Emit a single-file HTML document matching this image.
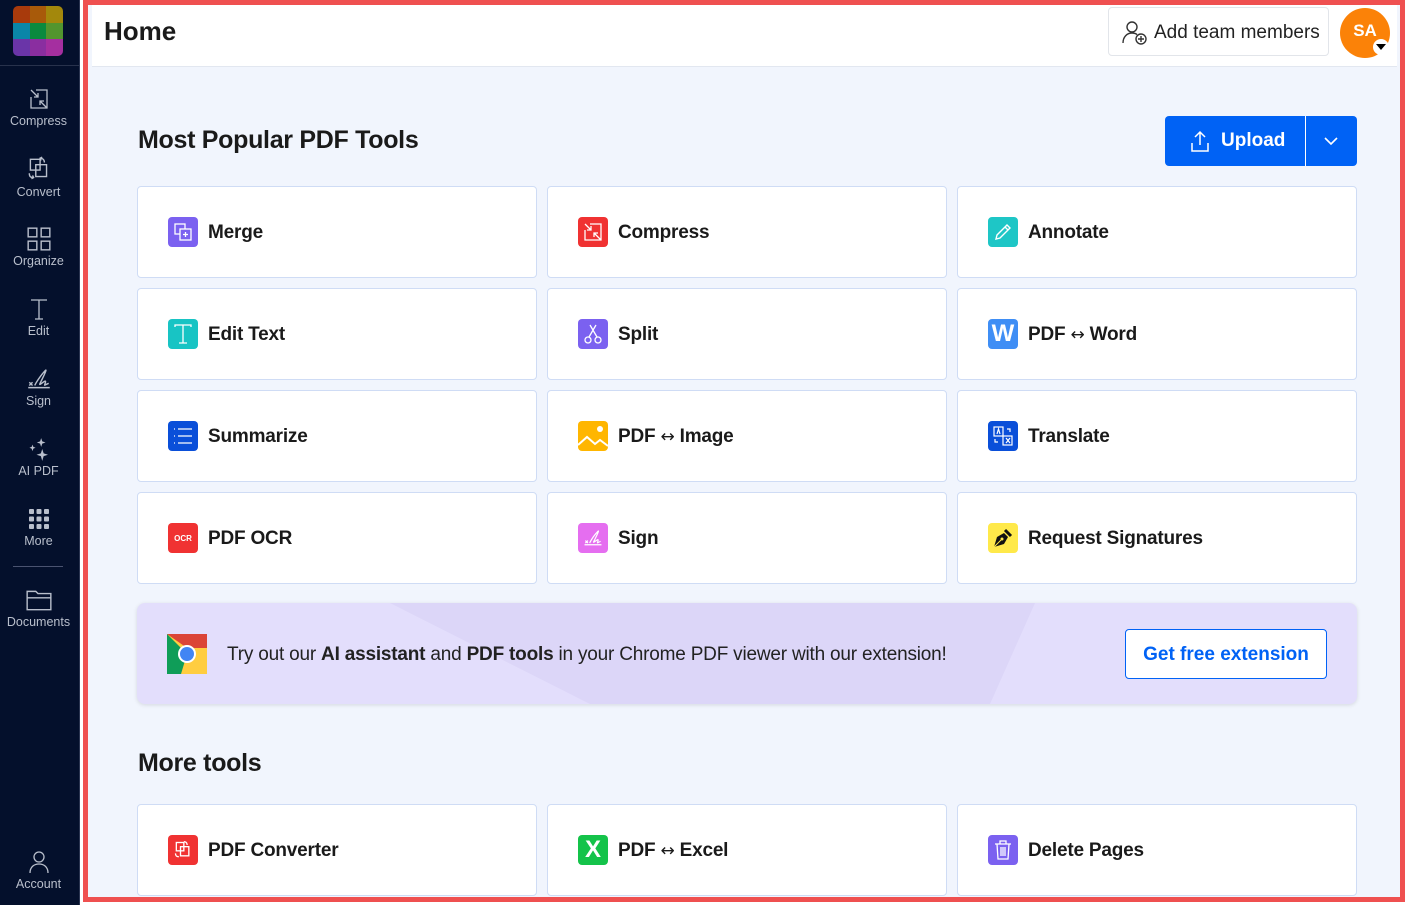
<!DOCTYPE html><html><head><style>
*{box-sizing:border-box;margin:0;padding:0}
body{width:1407px;height:905px;overflow:hidden;background:#fff;font-family:"Liberation Sans",sans-serif;position:relative}
.sb{position:absolute;left:0;top:0;width:80px;height:905px;background:#04102c;border-right:1px solid #2a3450}
.logo{position:absolute;left:13px;top:6px;width:50px;height:50px;border-radius:5px;overflow:hidden;display:grid;grid-template-columns:repeat(3,1fr)}
.sbi{position:absolute;left:0;width:77px;text-align:center;color:#b9bfcc;font-size:12.5px}
.sbi svg{display:block;margin:0 auto 2px}
.frame{position:absolute;left:83px;top:0;width:1322px;height:903px;border:5px solid #ef5050;background:#f1f5fd}
.hdr{position:absolute;left:92px;top:5px;width:1305px;height:62px;background:#fff;border-bottom:1px solid #e2e7f0}
.card{position:absolute;width:400px;height:92px;background:#fff;border:1px solid #cfdcf5;border-radius:4px}
.card .ic{position:absolute;left:30px;top:30px;width:30px;height:30px;border-radius:4px;display:flex;align-items:center;justify-content:center}
.card .t{position:absolute;left:70px;top:35px;font-size:19px;font-weight:bold;color:#1a1a1a;letter-spacing:-0.2px}
.ar{font-family:"DejaVu Sans",sans-serif;font-weight:normal;font-size:17px}
h2{position:absolute;font-size:25px;font-weight:bold;color:#1a1a1a;letter-spacing:-0.3px}
</style></head><body>
<div class="sb">
<div class="logo"><i style="background:#a83a0c"></i><i style="background:#a85a0a"></i><i style="background:#a3880c"></i><i style="background:#0a86a8"></i><i style="background:#0a8a3e"></i><i style="background:#52952e"></i><i style="background:#6a35a8"></i><i style="background:#8a2ea0"></i><i style="background:#a52fa0"></i></div>
<div style="position:absolute;left:0;top:65px;width:79px;border-top:1px solid #28324c"></div>
<div class="sbi" style="top:86px"><svg width="24" height="26" viewBox="0 0 24 24" fill="none" stroke="#b9bfcc" stroke-width="1.3"><path d="M9 3h11v18H4V10M4 3l7 7M11 6v4H7M20 21l-7-7M13 18v-4h4"/></svg>Compress</div>
<div class="sbi" style="top:155px"><svg width="26" height="28" viewBox="0 0 24 26" fill="none" stroke="#b9bfcc" stroke-width="1.3"><rect x="4" y="4" width="9" height="10"/><rect x="9" y="9" width="10" height="11"/><path d="M17 7c0-3-2-4-4-4M15 2l-2 1 1 2M3 17c0 3 1 4 4 4M5 22l2-1-1-2"/></svg>Convert</div>
<div class="sbi" style="top:226px"><svg width="26" height="26" viewBox="0 0 24 24" fill="none" stroke="#b9bfcc" stroke-width="1.3"><rect x="2" y="2" width="8" height="8"/><rect x="14" y="2" width="8" height="8"/><rect x="2" y="14" width="8" height="8"/><rect x="14" y="14" width="8" height="8"/></svg>Organize</div>
<div class="sbi" style="top:296px"><svg width="24" height="26" viewBox="0 0 24 24" fill="none" stroke="#b9bfcc" stroke-width="1.3"><path d="M4 3h16M12 3v19M8 22h8"/></svg>Edit</div>
<div class="sbi" style="top:366px"><svg width="28" height="26" viewBox="0 0 26 24" fill="none" stroke="#b9bfcc" stroke-width="1.3"><path d="M3 20h20M4 15l3 3M7 15l-3 3M9 18c3-6 8-12 10-14s-3 8-5 12 6-5 5-1-2 3 3 1"/></svg>Sign</div>
<div class="sbi" style="top:436px"><svg width="26" height="26" viewBox="0 0 24 24" fill="#b9bfcc"><path d="M14 2l1 3 3 1-3 1-1 3-1-3-3-1 3-1zM6 8l.8 2 2 .8-2 .8L6 14l-.8-2.4-2-.8 2-.8zM15 12l1.3 4 4 1.3-4 1.3L15 23l-1.3-4.4-4-1.3 4-1.3z"/></svg>AI PDF</div>
<div class="sbi" style="top:506px"><svg width="24" height="26" viewBox="0 0 24 24" fill="#b9bfcc"><rect x="2" y="2" width="5" height="5" rx="1"/><rect x="9.5" y="2" width="5" height="5" rx="1"/><rect x="17" y="2" width="5" height="5" rx="1"/><rect x="2" y="9.5" width="5" height="5" rx="1"/><rect x="9.5" y="9.5" width="5" height="5" rx="1"/><rect x="17" y="9.5" width="5" height="5" rx="1"/><rect x="2" y="17" width="5" height="5" rx="1"/><rect x="9.5" y="17" width="5" height="5" rx="1"/><rect x="17" y="17" width="5" height="5" rx="1"/></svg>More</div>
<div style="position:absolute;left:13px;top:566px;width:50px;border-top:1px solid #4a5370"></div>
<div class="sbi" style="top:587px"><svg width="28" height="26" viewBox="0 0 26 24" fill="none" stroke="#b9bfcc" stroke-width="1.3"><path d="M2 4h8l2 2h12v15H2zM2 10h22"/></svg>Documents</div>
<div class="sbi" style="top:849px"><svg width="24" height="26" viewBox="0 0 24 26" fill="none" stroke="#b9bfcc" stroke-width="1.3"><circle cx="12" cy="8" r="5"/><path d="M3 24c0-6 4-9 9-9s9 3 9 9"/></svg>Account</div>
</div>
<div class="frame"></div>
<div class="hdr">
<div style="position:absolute;left:12px;top:11px;font-size:26px;font-weight:bold;color:#1a1a1a">Home</div>
<div style="position:absolute;left:1016px;top:2px;width:221px;height:49px;border:1px solid #e2e5ea;border-radius:4px;font-size:19px;color:#222;padding:14px 0 0 45px">Add team members
<svg style="position:absolute;left:12px;top:11px" width="28" height="28" viewBox="0 0 28 28" fill="none" stroke="#333" stroke-width="1.4"><circle cx="11" cy="8" r="5"/><path d="M2 24c0-6 4-10 9-10 2 0 4 .6 5 1.6"/><circle cx="20" cy="20" r="5"/><path d="M20 17v6M17 20h6"/></svg></div>
<div style="position:absolute;left:1248px;top:3px;width:50px;height:50px;border-radius:50%;background:#fb8208;color:#fff;font-weight:bold;font-size:17px;text-align:center;line-height:46px">SA</div>
<div style="position:absolute;left:1281px;top:34px;width:16px;height:16px;border-radius:50%;background:#fff"><div style="margin:5px 0 0 3px;width:0;height:0;border-left:5px solid transparent;border-right:5px solid transparent;border-top:6px solid #000"></div></div>
</div>
<h2 style="left:138px;top:126px">Most Popular PDF Tools</h2>
<div style="position:absolute;left:1165px;top:116px;width:192px;height:50px;background:#0062f5;border-radius:4px;color:#fff">
<svg style="position:absolute;left:25px;top:14px" width="20" height="22" viewBox="0 0 20 22" fill="none" stroke="#fff" stroke-width="1.5"><path d="M10 15V2M5 7l5-5 5 5M2 13v8h16v-8"/></svg>
<div style="position:absolute;left:56px;top:14px;font-size:19px;font-weight:bold">Upload</div>
<div style="position:absolute;left:140px;top:0;height:50px;border-left:1px solid #fff"></div>
<svg style="position:absolute;left:158px;top:19px" width="16" height="12" viewBox="0 0 16 12" fill="none" stroke="#fff" stroke-width="1.6"><path d="M2 3l6 6 6-6"/></svg>
</div>

<div class="card" style="left:137px;top:186px"><div class="ic" style="background:#7b61f0"><svg width="20" height="20" viewBox="0 0 20 20" fill="none" stroke="#fff" stroke-width="1.3"><rect x="2" y="2" width="10" height="10"/><rect x="7" y="7" width="11" height="11" fill="#7b61f0"/><path d="M12.5 10v5M10 12.5h5"/></svg></div><div class="t">Merge</div></div>
<div class="card" style="left:547px;top:186px"><div class="ic" style="background:#f03232"><svg width="20" height="20" viewBox="0 0 20 20" fill="none" stroke="#fff" stroke-width="1.3"><path d="M7 2h11v16H2V8M2 2l6 6M8 4v4H4M18 18l-7-7M11 15v-4h4"/></svg></div><div class="t">Compress</div></div>
<div class="card" style="left:957px;top:186px"><div class="ic" style="background:#1ec6c6"><svg width="20" height="20" viewBox="0 0 20 20" fill="none" stroke="#fff" stroke-width="1.4"><path d="M3 17l1-4L14 3l3 3L7 16zM12 5l3 3"/></svg></div><div class="t">Annotate</div></div>

<div class="card" style="left:137px;top:288px"><div class="ic" style="background:#18c4c4"><svg width="20" height="22" viewBox="0 0 20 22" fill="none" stroke="#fff" stroke-width="1.3"><path d="M2 4V2h16v2M10 2v18M6 20h8"/></svg></div><div class="t">Edit Text</div></div>
<div class="card" style="left:547px;top:288px"><div class="ic" style="background:#7b61f0"><svg width="20" height="22" viewBox="0 0 20 22" fill="none" stroke="#fff" stroke-width="1.3"><circle cx="5" cy="17" r="3"/><circle cx="15" cy="17" r="3"/><path d="M6 14L13 2M14 14L7 2"/></svg></div><div class="t">Split</div></div>
<div class="card" style="left:957px;top:288px"><div class="ic" style="background:#3f8ef5;color:#fff;font-weight:bold;font-size:24px">W</div><div class="t">PDF <span class="ar">↔</span> Word</div></div>

<div class="card" style="left:137px;top:390px"><div class="ic" style="background:#0a4fd9"><svg width="22" height="20" viewBox="0 0 22 20" fill="none" stroke="#fff" stroke-width="1.3"><path d="M6 3h14M6 10h14M6 17h14M2 3h1M2 10h1M2 17h1"/></svg></div><div class="t">Summarize</div></div>
<div class="card" style="left:547px;top:390px"><div class="ic" style="background:#ffb600"><svg width="30" height="30" viewBox="0 0 30 30" fill="none" stroke="#fff" stroke-width="2"><path d="M0 24l9-8 8 7 5-4 8 6"/><circle cx="22" cy="8" r="3" fill="#fff" stroke="none"/></svg></div><div class="t">PDF <span class="ar">↔</span> Image</div></div>
<div class="card" style="left:957px;top:390px"><div class="ic" style="background:#0a4fd9"><svg width="22" height="22" viewBox="0 0 22 22" fill="none" stroke="#fff" stroke-width="1.2"><rect x="2" y="2" width="9" height="9"/><rect x="11" y="11" width="9" height="9"/><path d="M5 9l1.5-5L8 9M15 4h3v3M3 14v3h3M14 13l4 5M18 13l-4 5"/></svg></div><div class="t">Translate</div></div>

<div class="card" style="left:137px;top:492px"><div class="ic" style="background:#f03232;color:#fff;font-weight:bold;font-size:8px">OCR</div><div class="t">PDF OCR</div></div>
<div class="card" style="left:547px;top:492px"><div class="ic" style="background:#e56ef0"><svg width="22" height="22" viewBox="0 0 26 24" fill="none" stroke="#fff" stroke-width="1.4"><path d="M3 20h20M4 15l3 3M7 15l-3 3M9 18c3-6 8-12 10-14s-3 8-5 12 6-5 5-1-2 3 3 1"/></svg></div><div class="t">Sign</div></div>
<div class="card" style="left:957px;top:492px"><div class="ic" style="background:#ffe94a"><svg width="22" height="22" viewBox="0 0 22 22"><path d="M2 20l3-10 7-4 4 4-4 7z" fill="#111"/><path d="M13 3l6 6" stroke="#111" stroke-width="3"/><circle cx="10" cy="12" r="1.5" fill="#ffe94a"/><path d="M2 20l7-7" stroke="#ffe94a" stroke-width="1"/></svg></div><div class="t">Request Signatures</div></div>

<div style="position:absolute;left:137px;top:603px;width:1220px;height:101px;border-radius:8px;overflow:hidden;background:#e3defc;box-shadow:0 1px 4px rgba(0,0,0,.12)">
<div style="position:absolute;left:0;top:0;width:1220px;height:101px;background:#dcd6f8;clip-path:polygon(253px 0,898px 0,853px 101px,453px 101px)"></div>
<svg style="position:absolute;left:30px;top:31px" width="40" height="40" viewBox="0 0 40 40"><rect width="40" height="40" fill="#ffcd40"/><path d="M0 0h40v14H20z" fill="#db4437"/><path d="M0 0v40h14l6-20z" fill="#0f9d58"/><circle cx="20" cy="20" r="9" fill="#fff"/><circle cx="20" cy="20" r="7" fill="#4285f4"/></svg>
<div style="position:absolute;left:90px;top:41px;font-size:19px;color:#222;letter-spacing:-0.2px">Try out our <b>AI assistant</b> and <b>PDF tools</b> in your Chrome PDF viewer with our extension!</div>
<div style="position:absolute;left:988px;top:26px;width:202px;height:50px;border:1px solid #0062f5;border-radius:4px;background:#fff;color:#0062f5;font-weight:bold;font-size:19px;text-align:center;line-height:49px">Get free extension</div>
</div>

<h2 style="left:138px;top:749px">More tools</h2>
<div class="card" style="left:137px;top:804px"><div class="ic" style="background:#f03232"><svg width="20" height="22" viewBox="0 0 24 26" fill="none" stroke="#fff" stroke-width="1.6"><rect x="4" y="4" width="9" height="10"/><rect x="9" y="9" width="10" height="11"/><path d="M17 7c0-3-2-4-4-4M3 17c0 3 1 4 4 4"/></svg></div><div class="t">PDF Converter</div></div>
<div class="card" style="left:547px;top:804px"><div class="ic" style="background:#14c34a;color:#fff;font-weight:bold;font-size:24px">X</div><div class="t">PDF <span class="ar">↔</span> Excel</div></div>
<div class="card" style="left:957px;top:804px"><div class="ic" style="background:#7b61f0"><svg width="20" height="22" viewBox="0 0 20 22" fill="none" stroke="#fff" stroke-width="1.3"><path d="M2 5h16M7 5V2h6v3M4 5l1 15h10l1-15M8 8v9M10 8v9M12 8v9"/></svg></div><div class="t">Delete Pages</div></div>
<div style="position:absolute;left:83px;top:897px;width:1322px;height:8px;background:#fff;border-top:5px solid #ef5050"></div>
</body></html>
